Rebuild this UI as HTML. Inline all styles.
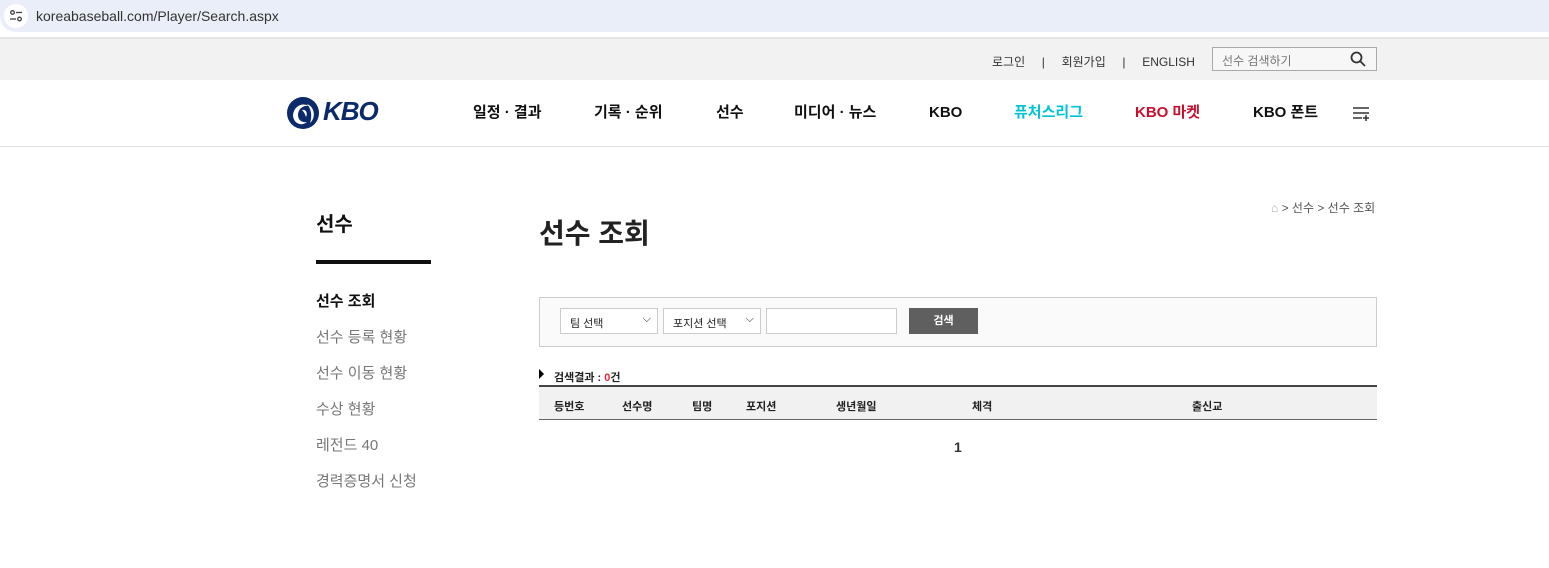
<!DOCTYPE html>
<html><head><meta charset="utf-8"><style>
*{margin:0;padding:0;box-sizing:border-box}
body{width:1549px;height:568px;overflow:hidden;background:#fff;font-family:"Liberation Sans","Noto Sans CJK KR",sans-serif;color:#222;position:relative}
.abs{position:absolute}
.urlbar{left:0;top:0;width:1549px;height:32px;background:#e9eef8;border-radius:0 0 0 16px}
.top{left:0;top:39px;width:1549px;height:41px;background:#f2f2f2}
.nav{left:0;top:80px;width:1549px;height:67px;border-bottom:1px solid #e2e2e2;background:#fff}
.nv{top:103px;height:20px;line-height:20px;font-size:15px;font-weight:bold;color:#111;white-space:nowrap}
.side{font-size:15px;color:#777;left:316px;line-height:20px}
</style></head><body>
<div class="abs urlbar"></div>
<div class="abs" style="left:4px;top:4px;width:24px;height:24px;border-radius:12px;background:#fff"></div>
<svg class="abs" style="left:9px;top:9px" width="14" height="14" viewBox="0 0 14 14" fill="none" stroke="#444" stroke-width="1.3"><circle cx="3.5" cy="3.5" r="1.8"/><line x1="7" y1="3.5" x2="13" y2="3.5"/><line x1="1" y1="10" x2="7" y2="10"/><circle cx="10.5" cy="10" r="1.8"/></svg>
<div class="abs" style="left:36px;top:8px;font-size:14px;color:#333">koreabaseball.com/Player/Search.aspx</div>
<div class="abs" style="left:0;top:37px;width:1549px;height:2px;background:#e5e5e5"></div>
<div class="abs top"></div>
<div class="abs" style="top:53px;left:992px;font-size:12px;color:#333;white-space:nowrap">로그인 &nbsp;&nbsp;&nbsp;&nbsp;|&nbsp;&nbsp;&nbsp;&nbsp; 회원가입 &nbsp;&nbsp;&nbsp;&nbsp;|&nbsp;&nbsp;&nbsp;&nbsp; ENGLISH</div>
<div class="abs" style="left:1212px;top:47px;width:165px;height:24px;border:1px solid #aaa;background:#f7f7f7"></div>
<div class="abs" style="left:1222px;top:52px;font-size:12px;color:#777">선수 검색하기</div>
<svg class="abs" style="left:1350px;top:51px" width="16" height="16" viewBox="0 0 16 16" fill="none" stroke="#333" stroke-width="1.8"><circle cx="6.5" cy="6.5" r="5"/><line x1="10" y1="10" x2="15" y2="15"/></svg>
<div class="abs nav"></div>
<svg class="abs" style="left:286px;top:96px" width="34" height="34" viewBox="0 0 34 34"><circle cx="17" cy="17" r="16" fill="#0a2a6b"/><path d="M7 19 C8 10 16 6 23 10 C17 9 12 13 12 19 C12 24 16 27 21 26 C15 31 7 27 7 19Z" fill="#fff"/><path d="M21 8 C29 11 30 22 24 27 C26 21 26 14 21 8Z" fill="#fff"/><path d="M16 14 C20 13 22 17 20 21 C19 18 18 16 16 14Z" fill="#fff"/></svg>
<div class="abs" style="left:323px;top:96px;font-size:26px;font-weight:bold;font-style:italic;color:#0a2a6b;letter-spacing:-1px">KBO</div>
<div class="abs nv" style="left:473px">일정 · 결과</div>
<div class="abs nv" style="left:594px">기록 · 순위</div>
<div class="abs nv" style="left:716px">선수</div>
<div class="abs nv" style="left:794px">미디어 · 뉴스</div>
<div class="abs nv" style="left:929px">KBO</div>
<div class="abs nv" style="left:1014px;color:#00c4d4">퓨처스리그</div>
<div class="abs nv" style="left:1135px;color:#c8102e">KBO 마켓</div>
<div class="abs nv" style="left:1253px">KBO 폰트</div>
<svg class="abs" style="left:1353px;top:106px" width="17" height="15" viewBox="0 0 17 15" stroke="#333" stroke-width="1.5"><line x1="0" y1="2" x2="16" y2="2"/><line x1="0" y1="7" x2="16" y2="7"/><line x1="0" y1="12" x2="9" y2="12"/><line x1="13" y1="9" x2="13" y2="15"/><line x1="10" y1="12" x2="16" y2="12"/></svg>

<div class="abs" style="left:316px;top:208px;font-size:20px;font-weight:bold;color:#111">선수</div>
<div class="abs" style="left:316px;top:260px;width:115px;height:4px;background:#111"></div>
<div class="abs side" style="top:292px;color:#111;font-weight:bold">선수 조회</div>
<div class="abs side" style="top:328px">선수 등록 현황</div>
<div class="abs side" style="top:364px">선수 이동 현황</div>
<div class="abs side" style="top:400px">수상 현황</div>
<div class="abs side" style="top:436px">레전드 40</div>
<div class="abs side" style="top:472px">경력증명서 신청</div>

<div class="abs" style="left:1271px;top:199px;font-size:12px;color:#555;white-space:nowrap"><span style="color:#aaa">⌂</span> &gt; 선수 &gt; 선수 조회</div>
<div class="abs" style="left:539px;top:212px;font-size:28px;font-weight:bold;color:#222">선수 조회</div>

<div class="abs" style="left:539px;top:297px;width:838px;height:50px;border:1px solid #ccc;background:#fafafa"></div>
<div class="abs" style="left:560px;top:308px;width:98px;height:26px;border:1px solid #ccc;background:#fff;font-size:11px;padding:6px 9px">팀 선택<span style="position:absolute;right:6px;top:4px;font-size:11px">⌵</span></div>
<div class="abs" style="left:663px;top:308px;width:98px;height:26px;border:1px solid #ccc;background:#fff;font-size:11px;padding:6px 9px">포지션 선택<span style="position:absolute;right:6px;top:4px;font-size:11px">⌵</span></div>
<div class="abs" style="left:766px;top:308px;width:131px;height:26px;border:1px solid #ccc;background:#fff"></div>
<div class="abs" style="left:909px;top:308px;width:69px;height:26px;background:#5f5f5f;color:#fff;font-size:11px;font-weight:bold;text-align:center;line-height:26px">검색</div>

<div class="abs" style="left:539px;top:369px;width:0;height:0;border-left:5px solid #000;border-top:5px solid transparent;border-bottom:5px solid transparent"></div>
<div class="abs" style="left:554px;top:369px;font-size:11px;font-weight:bold">검색결과 : <span style="color:#e8283c">0</span>건</div>
<div class="abs" style="left:539px;top:385px;width:838px;height:35px;background:#f1f1f1;border-top:2px solid #444;border-bottom:1px solid #666"></div>
<div class="abs" style="top:398px;left:554px;font-size:11px;font-weight:bold">등번호</div>
<div class="abs" style="top:398px;left:622px;font-size:11px;font-weight:bold">선수명</div>
<div class="abs" style="top:398px;left:692px;font-size:11px;font-weight:bold">팀명</div>
<div class="abs" style="top:398px;left:746px;font-size:11px;font-weight:bold">포지션</div>
<div class="abs" style="top:398px;left:836px;font-size:11px;font-weight:bold">생년월일</div>
<div class="abs" style="top:398px;left:972px;font-size:11px;font-weight:bold">체격</div>
<div class="abs" style="top:398px;left:1192px;font-size:11px;font-weight:bold">출신교</div>
<div class="abs" style="top:439px;left:954px;font-size:14px;font-weight:bold;color:#333">1</div>
</body></html>
